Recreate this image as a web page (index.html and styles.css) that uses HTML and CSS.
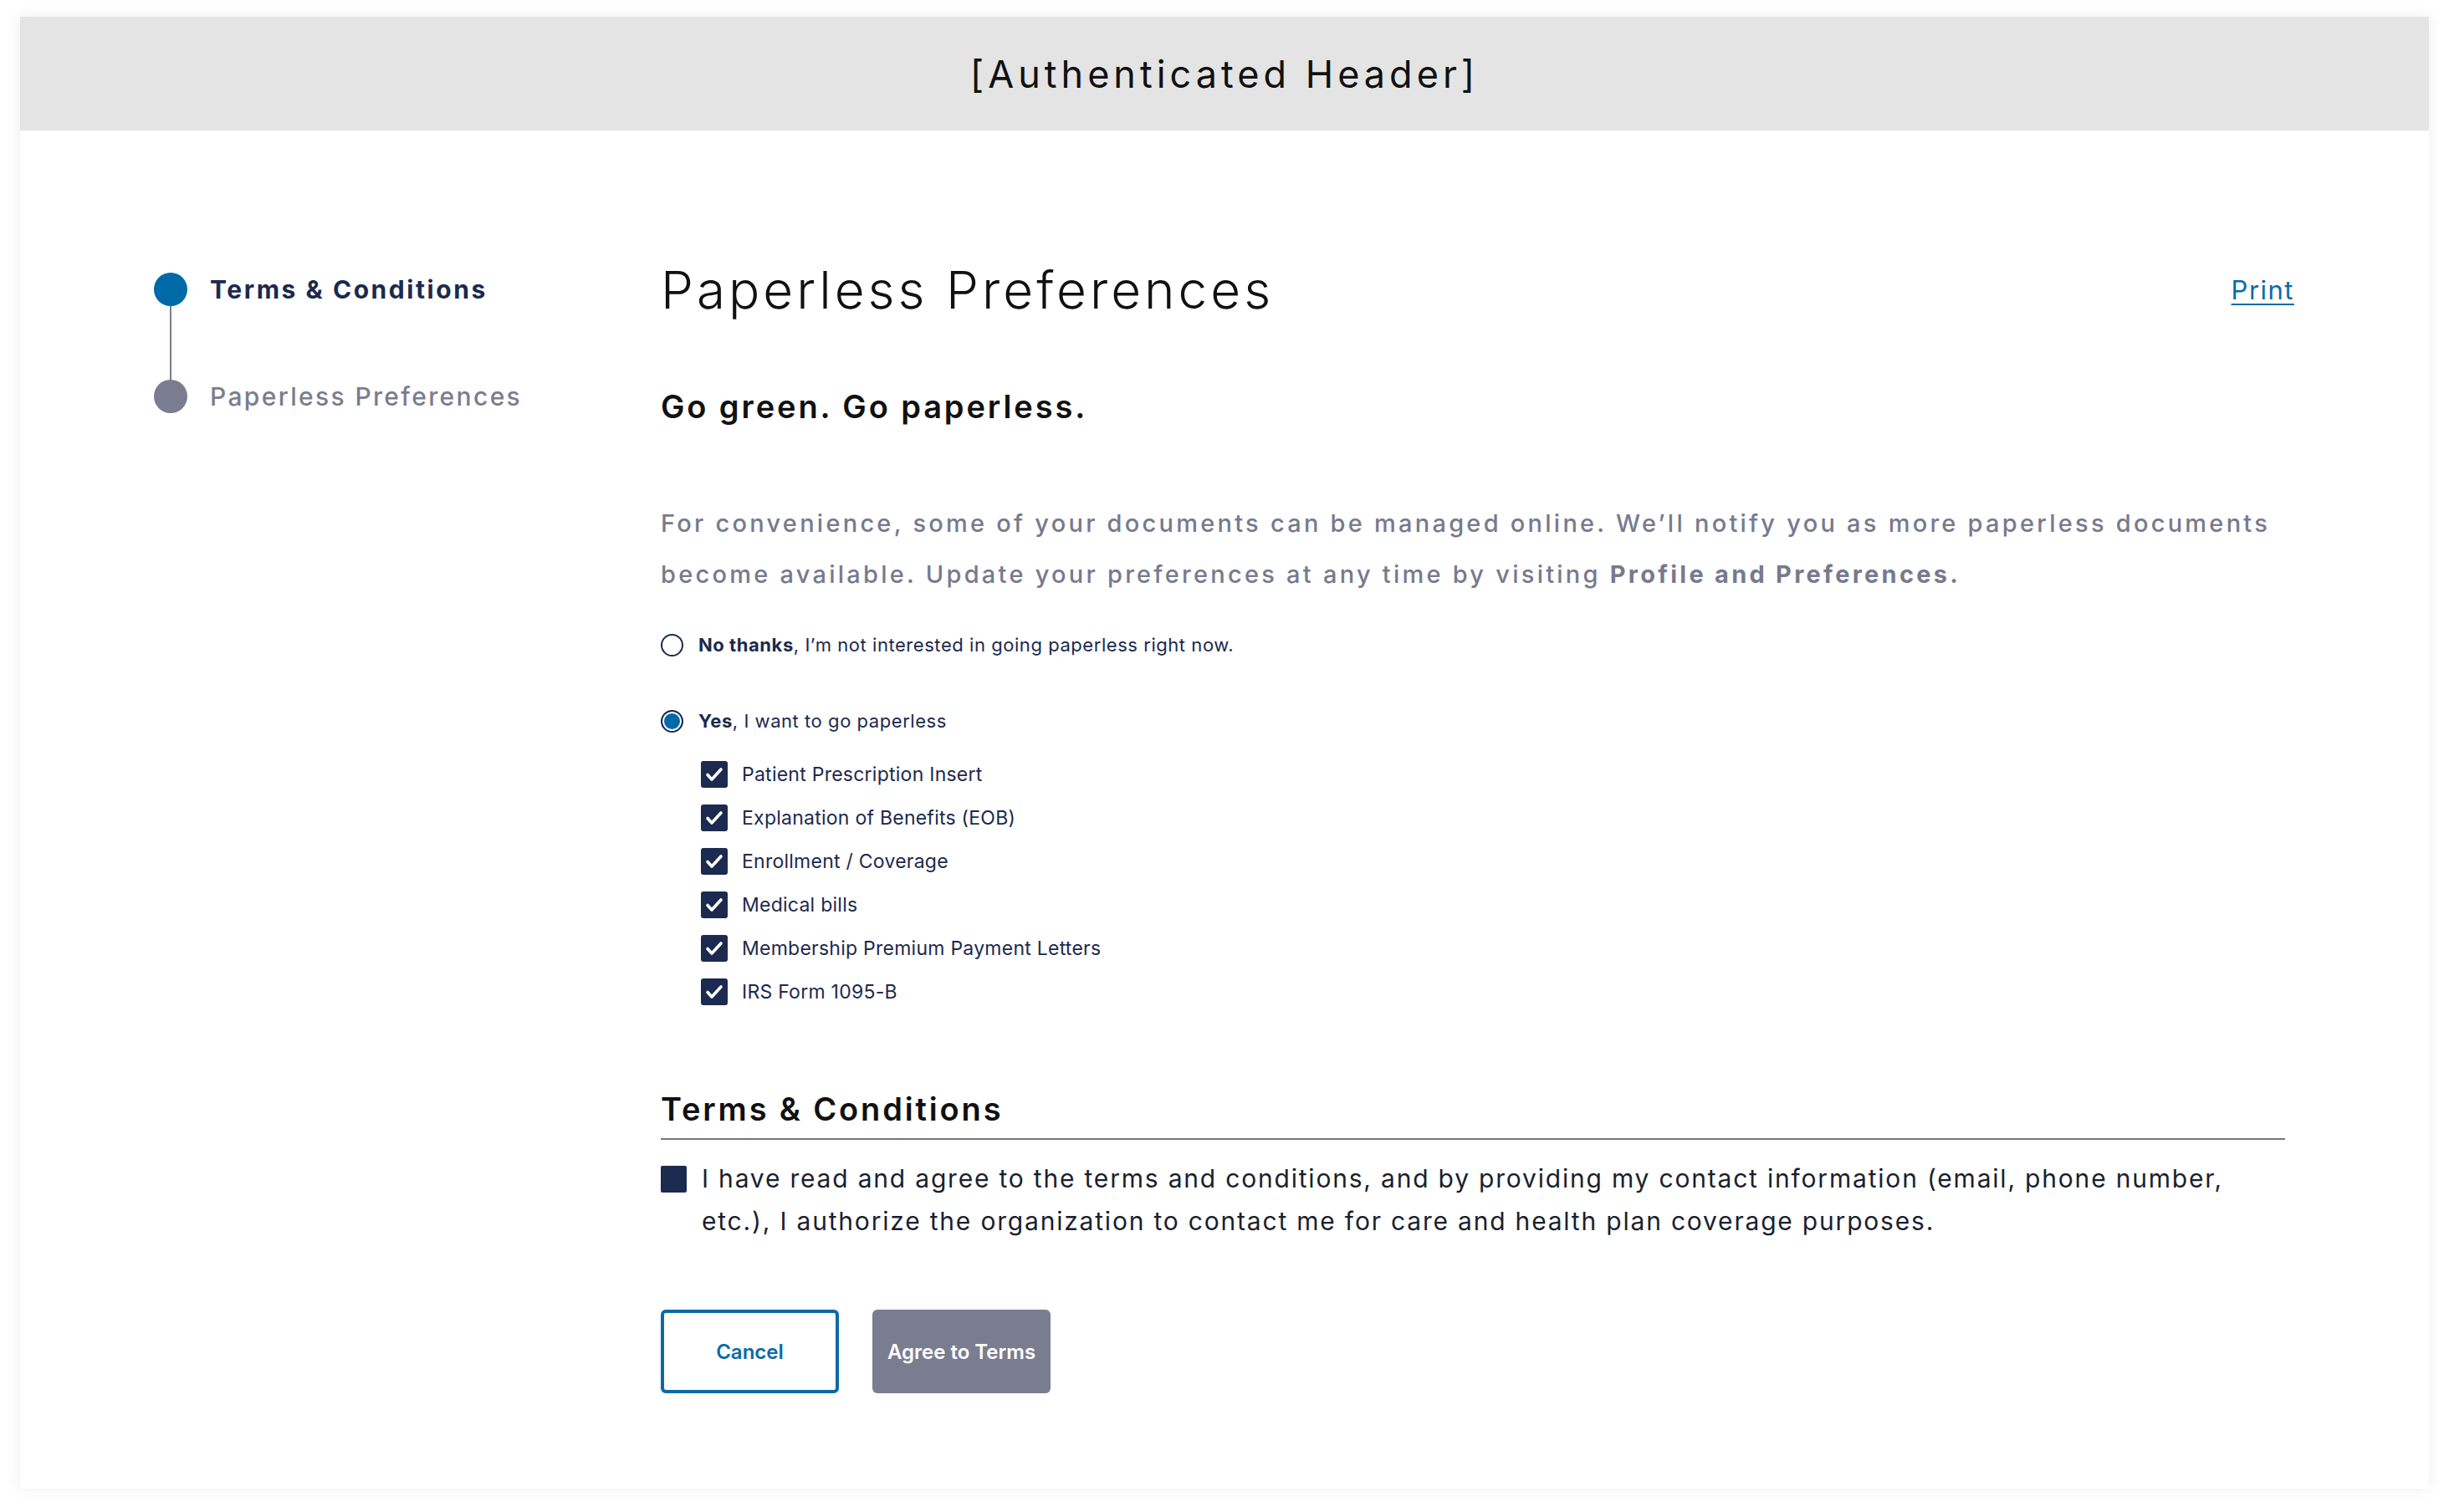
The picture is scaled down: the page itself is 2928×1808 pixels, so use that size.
FILE: index.html
```html
<!DOCTYPE html>
<html lang="en">
<head>
<meta charset="utf-8">
<title>Paperless Preferences</title>
<link rel="stylesheet" href="styles.css">
</head>
<body>
<div class="page">
  <div class="card">
    <header class="auth-header">[Authenticated Header]</header>
    <div class="main">
      <nav class="stepper">
        <div class="step step-active"><span class="dot"></span><span class="step-label">Terms &amp; Conditions</span></div>
        <div class="connector"></div>
        <div class="step step-next"><span class="dot"></span><span class="step-label">Paperless Preferences</span></div>
      </nav>
      <section class="content">
        <div class="title-row">
          <h1 class="title">Paperless Preferences</h1>
          <a class="print" href="#">Print</a>
        </div>
        <h2 class="subtitle">Go green. Go paperless.</h2>
        <p class="intro">For convenience, some of your documents can be managed online. We’ll notify you as more paperless documents<br>become available. Update your preferences at any time by visiting <strong>Profile and Preferences.</strong></p>
        <div class="radio-row radio-first">
          <span class="radio"></span>
          <span class="radio-label"><b>No thanks</b>, I’m not interested in going paperless right now.</span>
        </div>
        <div class="radio-row radio-second">
          <span class="radio radio-on"></span>
          <span class="radio-label"><b>Yes</b>, I want to go paperless</span>
        </div>
        <ul class="checklist">
          <li class="check-row"><span class="checkbox"><svg viewBox="0 0 32 32"><path d="M8 16.5l5 5.5 11-12" fill="none" stroke="#fff" stroke-width="3.6" stroke-linecap="round" stroke-linejoin="round"/></svg></span><span class="check-label">Patient Prescription Insert</span></li>
          <li class="check-row"><span class="checkbox"><svg viewBox="0 0 32 32"><path d="M8 16.5l5 5.5 11-12" fill="none" stroke="#fff" stroke-width="3.6" stroke-linecap="round" stroke-linejoin="round"/></svg></span><span class="check-label">Explanation of Benefits (EOB)</span></li>
          <li class="check-row"><span class="checkbox"><svg viewBox="0 0 32 32"><path d="M8 16.5l5 5.5 11-12" fill="none" stroke="#fff" stroke-width="3.6" stroke-linecap="round" stroke-linejoin="round"/></svg></span><span class="check-label">Enrollment / Coverage</span></li>
          <li class="check-row"><span class="checkbox"><svg viewBox="0 0 32 32"><path d="M8 16.5l5 5.5 11-12" fill="none" stroke="#fff" stroke-width="3.6" stroke-linecap="round" stroke-linejoin="round"/></svg></span><span class="check-label">Medical bills</span></li>
          <li class="check-row"><span class="checkbox"><svg viewBox="0 0 32 32"><path d="M8 16.5l5 5.5 11-12" fill="none" stroke="#fff" stroke-width="3.6" stroke-linecap="round" stroke-linejoin="round"/></svg></span><span class="check-label">Membership Premium Payment Letters</span></li>
          <li class="check-row"><span class="checkbox"><svg viewBox="0 0 32 32"><path d="M8 16.5l5 5.5 11-12" fill="none" stroke="#fff" stroke-width="3.6" stroke-linecap="round" stroke-linejoin="round"/></svg></span><span class="check-label">IRS Form 1095-B</span></li>
        </ul>
        <h2 class="terms-heading">Terms &amp; Conditions</h2>
        <div class="terms-row">
          <span class="terms-box"></span>
          <p class="terms-text">I have read and agree to the terms and conditions, and by providing my contact information (email, phone number,<br>etc.), I authorize the organization to contact me for care and health plan coverage purposes.</p>
        </div>
        <div class="actions">
          <button class="btn btn-cancel" type="button">Cancel</button>
          <button class="btn btn-agree" type="button">Agree to Terms</button>
        </div>
      </section>
    </div>
  </div>
</div>
</body>
</html>
```
FILE: styles.css
```css
* { box-sizing: border-box; }
html, body { margin: 0; padding: 0; background: #ffffff; }
body { font-family: "Inter", "Liberation Sans", sans-serif; color: #1b2a4e; }

.page { padding: 20px 24px 28px 24px; }

.card {
  width: 2880px;
  min-height: 1760px;
  background: #ffffff;
  box-shadow: 0 0 18px rgba(0, 0, 0, 0.07);
}

.auth-header {
  height: 136px;
  background: #e4e4e4;
  display: flex;
  align-items: center;
  justify-content: center;
  font-size: 45px;
  font-weight: 400;
  letter-spacing: 5px;
  color: #111111;
}

.main {
  display: grid;
  grid-template-columns: 606px 1fr;
  padding: 0 161px 114px 160px;
}

/* stepper */
.stepper { padding-top: 170px; }
.step { display: flex; align-items: center; height: 40px; gap: 27px; }
.dot { width: 40px; height: 40px; border-radius: 50%; flex: none; }
.step-active .dot { background: #006aa8; }
.step-next .dot { background: #7a7d90; }
.step-label { font-size: 30px; white-space: nowrap; }
.step-active .step-label { font-weight: 700; color: #1b2a4e; letter-spacing: 2.55px; }
.step-next .step-label { font-weight: 500; color: #7a7d90; letter-spacing: 2.35px; }
.connector { width: 2px; height: 88px; margin-left: 19px; background: #7a7d90; }

/* content */
.content { padding-top: 155px; }
.title-row { display: flex; justify-content: space-between; align-items: center; }
.title {
  margin: 0;
  font-size: 62px;
  line-height: 72px;
  font-weight: 300;
  letter-spacing: 4px;
  color: #111111;
}
.print {
  font-size: 31px;
  line-height: 40px;
  letter-spacing: 1.5px;
  color: #0a6aa8;
  text-decoration: underline;
  text-underline-offset: 5px;
  text-decoration-thickness: 2px;
}

.subtitle {
  margin: 81px 0 0 0;
  font-size: 38px;
  line-height: 44px;
  font-weight: 600;
  letter-spacing: 2.9px;
  color: #111111;
}

.intro {
  margin: 87px 0 0 0;
  font-size: 29px;
  line-height: 61px;
  font-weight: 500;
  letter-spacing: 3.25px;
  color: #767a8e;
  white-space: nowrap;
}
.intro strong { font-weight: 700; }

.radio-row { display: flex; align-items: center; height: 30px; gap: 18px; }
.radio-first { margin-top: 39px; }
.radio-second { margin-top: 61px; }
.radio {
  width: 27px; height: 27px; border-radius: 50%;
  border: 2px solid #1b2a4e;
  background: #ffffff;
  flex: none;
}
.radio-on { background: #006aa8; box-shadow: inset 0 0 0 2px #ffffff; }
.radio-label { font-size: 22px; line-height: 30px; letter-spacing: 0.55px; color: #1b2a4e; }
.radio-label b { font-weight: 700; }

.checklist {
  list-style: none;
  margin: 33px 0 0 48px;
  padding: 0;
  display: flex;
  flex-direction: column;
  gap: 20px;
}
.check-row { display: flex; align-items: center; gap: 17px; height: 32px; }
.checkbox {
  width: 32px; height: 32px; border-radius: 3px;
  background: #1b2a4e; flex: none; display: flex;
}
.checkbox svg { width: 32px; height: 32px; }
.check-label { font-size: 23px; line-height: 32px; letter-spacing: 0.25px; color: #1b2a4e; }

.terms-heading {
  margin: 101px 11px 0 0;
  padding-bottom: 12px;
  border-bottom: 2px solid #767676;
  font-size: 38px;
  line-height: 46px;
  font-weight: 600;
  letter-spacing: 2.85px;
  color: #111111;
}

.terms-row { display: flex; align-items: flex-start; gap: 18px; margin-top: 21px; }
.terms-box {
  width: 31px; height: 32px; margin-top: 10px;
  background: #1b2a4e; border-radius: 2px; flex: none;
}
.terms-text {
  margin: 0;
  font-size: 30px;
  line-height: 51px;
  letter-spacing: 1.8px;
  color: #1a1f2e;
  white-space: nowrap;
}

.actions { display: flex; gap: 40px; margin-top: 80px; }
.btn {
  width: 213px; height: 100px;
  border-radius: 6px;
  font-family: "Inter", "Liberation Sans", sans-serif;
  font-size: 24px;
  font-weight: 600;
  cursor: pointer;
}
.btn-cancel { background: #ffffff; border: 4px solid #0a6aa8; color: #0a6aa8; }
.btn-agree { background: #7a7d90; border: none; color: #ffffff; }
```
